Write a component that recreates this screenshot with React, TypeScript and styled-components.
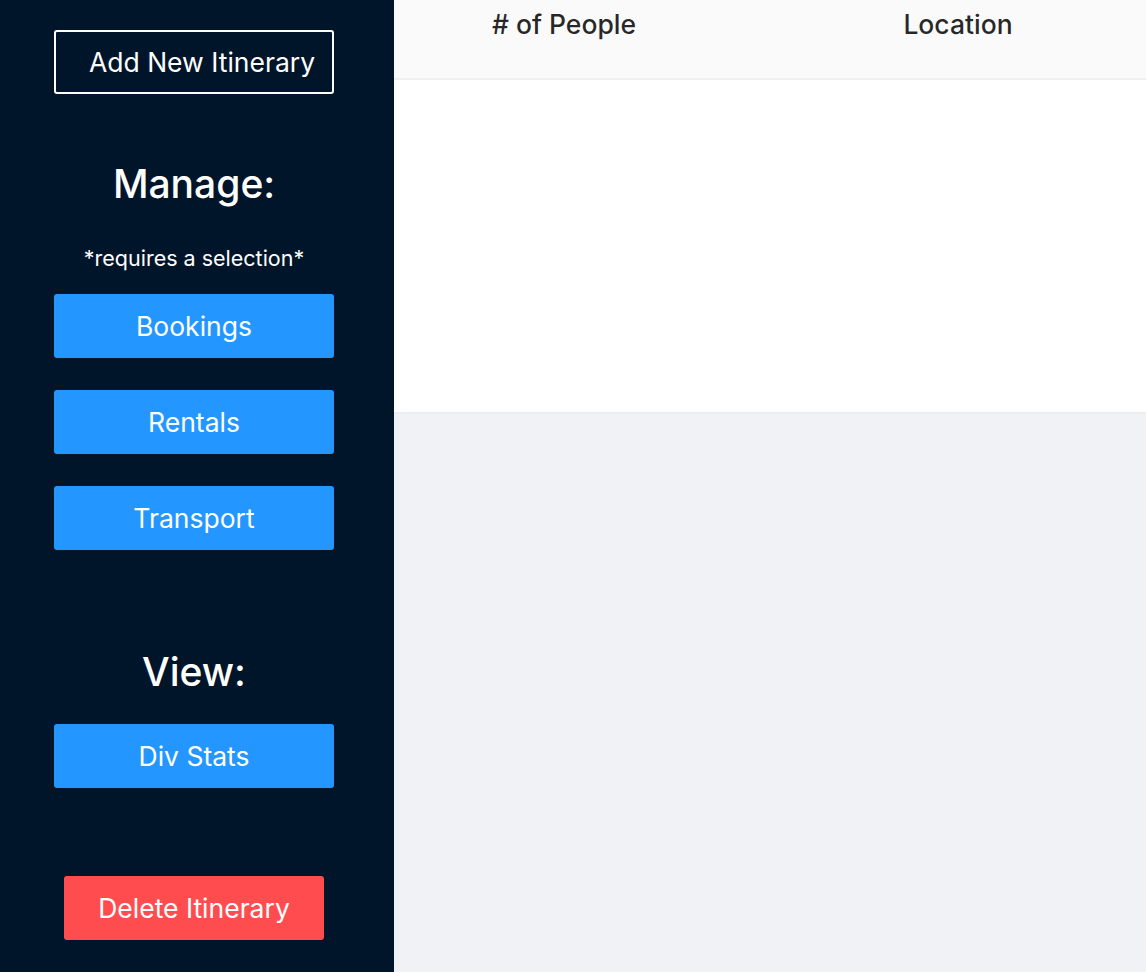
import styled, { createGlobalStyle } from 'styled-components'

const GlobalStyle = createGlobalStyle`
  html, body {
    margin: 0;
    padding: 0;
    background: #f0f2f5;
    font-family: Inter, "Noto Sans", "Liberation Sans", sans-serif;
  }
`

const Layout = styled.div`
  display: flex;
  width: 1146px;
  height: 972px;
  overflow: hidden;
`

const Sidebar = styled.aside`
  width: 394px;
  flex-shrink: 0;
  background: #001529;
  display: flex;
  flex-direction: column;
  align-items: center;
  padding: 30px 6px 0 0;
  box-sizing: border-box;
`

const OutlineButton = styled.button`
  width: 280px;
  height: 64px;
  box-sizing: border-box;
  border: 2px solid #ffffff;
  border-radius: 3px;
  background: transparent;
  color: #ffffff;
  font-family: inherit;
  font-size: 26.5px;
  padding: 0 0 0 16px;
  cursor: pointer;
`

const Heading = styled.h3<{ $top: number }>`
  margin: ${(p) => p.$top}px 0 0;
  color: #ffffff;
  font-size: 39px;
  font-weight: 500;
  line-height: 54px;
`

const Note = styled.p`
  margin: 32px 0 0;
  color: #ffffff;
  font-size: 21.5px;
  line-height: 30px;
`

const ActionButton = styled.button<{ $danger?: boolean; $top: number }>`
  width: ${(p) => (p.$danger ? 260 : 280)}px;
  height: 64px;
  margin-top: ${(p) => p.$top}px;
  border: none;
  border-radius: 3px;
  background: ${(p) => (p.$danger ? '#ff4d4f' : '#2496ff')};
  color: #ffffff;
  font-family: inherit;
  font-size: 26.5px;
  cursor: pointer;
`

const Main = styled.main`
  flex: 1;
  display: flex;
  flex-direction: column;
  overflow: hidden;
`

const TableHead = styled.div`
  display: grid;
  grid-template-columns: 340px 448px;
  height: 78px;
  background: #fafafa;
  border-bottom: 2px solid #f0f0f0;
  flex-shrink: 0;
`

const HeadCell = styled.div`
  text-align: center;
  padding-top: 6px;
  font-size: 26.5px;
  font-weight: 500;
  line-height: 36px;
  color: rgba(0, 0, 0, 0.85);
  white-space: nowrap;
`

const TableBody = styled.div`
  height: 332px;
  background: #ffffff;
  border-bottom: 2px solid #ebedf0;
`

const sections = ['Bookings', 'Rentals', 'Transport']

export default function App() {
  return (
    <>
      <GlobalStyle />
      <Layout>
        <Sidebar>
          <OutlineButton type="button">Add New Itinerary</OutlineButton>
          <Heading $top={63}>Manage:</Heading>
          <Note>*requires a selection*</Note>
          {sections.map((name, i) => (
            <ActionButton key={name} type="button" $top={i === 0 ? 21 : 32}>
              {name}
            </ActionButton>
          ))}
          <Heading $top={95}>View:</Heading>
          <ActionButton type="button" $top={25}>Div Stats</ActionButton>
          <ActionButton type="button" $danger $top={88}>Delete Itinerary</ActionButton>
        </Sidebar>
        <Main>
          <TableHead>
            <HeadCell># of People</HeadCell>
            <HeadCell>Location</HeadCell>
          </TableHead>
          <TableBody />
        </Main>
      </Layout>
    </>
  )
}
